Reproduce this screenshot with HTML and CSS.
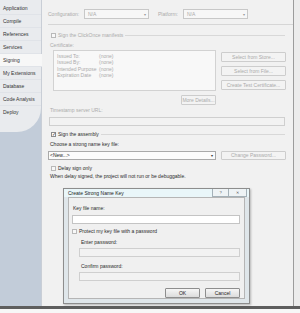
FILE: index.html
```html
<!DOCTYPE html>
<html>
<head>
    <title>Signing</title>
    <link rel="stylesheet" href="styles.css">
</head>
<body>
    <div class="window">
        <div class="sidebar">
            <div class="tabs">
                <div class="tab">Application</div>
                <div class="tab">Compile</div>
                <div class="tab">References</div>
                <div class="tab">Services</div>
                <div class="tab active">Signing</div>
                <div class="tab">My Extensions</div>
                <div class="tab">Database</div>
                <div class="tab">Code Analysis</div>
                <div class="tab last">Deploy</div>
            </div>
        </div>

        <div class="content">
            <div class="cfg-row off">
                <span class="cfg-label">Configuration:</span>
                <div class="select cfg-select">N/A<span class="arrow">&#9662;</span></div>
                <span class="cfg-label plat">Platform:</span>
                <div class="select cfg-select">N/A<span class="arrow">&#9662;</span></div>
            </div>
            <div class="rule"></div>

            <div class="hdr-row off first-hdr">
                <span class="check"></span>
                <span>Sign the ClickOnce manifests</span>
                <span class="hdr-line"></span>
            </div>
            <div class="label off cert-label">Certificate:</div>
            <div class="cert-area">
                <div class="cert-box off">
                    <div class="cert-line"><span class="key">Issued To:</span><span>(none)</span></div>
                    <div class="cert-line"><span class="key">Issued By:</span><span>(none)</span></div>
                    <div class="cert-line"><span class="key">Intended Purpose</span><span>(none)</span></div>
                    <div class="cert-line"><span class="key">Expiration Date</span><span>(none)</span></div>
                </div>
                <div class="cert-buttons">
                    <div class="btn off">Select from Store...</div>
                    <div class="btn off">Select from File...</div>
                    <div class="btn off">Create Test Certificate...</div>
                </div>
            </div>
            <div class="more-row">
                <div class="btn off more">More Details...</div>
            </div>
            <div class="label off ts-label">Timestamp server URL:</div>
            <div class="input ts-input"></div>

            <div class="hdr-row sign-hdr">
                <span class="check checked">&#10003;</span>
                <span>Sign the assembly</span>
                <span class="hdr-line"></span>
            </div>
            <div class="label choose">Choose a strong name key file:</div>
            <div class="key-row">
                <div class="select key-select">&lt;New...&gt;<span class="arrow dark">&#9662;</span></div>
                <div class="btn off change">Change Password...</div>
            </div>
            <div class="hdr-row delay-row">
                <span class="check"></span>
                <span>Delay sign only</span>
            </div>
            <div class="label note">When delay signed, the project will not run or be debuggable.</div>

            <div class="dialog">
                <div class="dlg-title">
                    <span class="dlg-caption">Create Strong Name Key</span>
                    <span class="dlg-ctrls">
                        <span class="ctrl">?</span>
                        <span class="ctrl close">&#10005;</span>
                    </span>
                </div>
                <div class="dlg-body">
                    <div class="label">Key file name:</div>
                    <div class="input white key-input"></div>
                    <div class="hdr-row protect-row">
                        <span class="check"></span>
                        <span>Protect my key file with a password</span>
                    </div>
                    <div class="pw-block">
                        <div class="label">Enter password:</div>
                        <div class="input pw-input"></div>
                        <div class="label confirm">Confirm password:</div>
                        <div class="input pw-input"></div>
                    </div>
                    <div class="dlg-buttons">
                        <div class="btn dlg-btn">OK</div>
                        <div class="btn dlg-btn">Cancel</div>
                    </div>
                </div>
            </div>
        </div>
        <div class="edge"></div>
    </div>
    <div class="bottom"></div>
</body>
</html>
```

FILE: styles.css
```css
body {
    margin: 0;
    width: 300px;
    height: 313px;
    overflow: hidden;
    background: #f4f4f4;
    font-family: "Liberation Sans", Arial, sans-serif;
    font-size: 5px;
    color: #2a2a2a;
}
.window {
    display: flex;
    height: 306px;
    border-bottom: 3px solid #5e5e5e;
}
.sidebar {
    width: 41px;
    background: #c2ccd9;
    border-right: 1px solid #c9ced6;
}
.tabs {
    background: #e9ebee;
    padding-top: 2px;
    border-bottom-right-radius: 24px;
}
.tab {
    height: 13px;
    line-height: 13px;
    padding-left: 3px;
    border-bottom: 1px solid #e0e3e8;
    box-sizing: border-box;
    color: #333;
}
.tab.active {
    background: #f7f7f7;
    margin-right: -1px;
}
.tab.last {
    height: 26px;
    line-height: 13px;
    border-bottom: none;
}
.content {
    width: 252px;
    background: #f1f1f1;
    display: flex;
    flex-direction: column;
    padding-left: 6px;
    box-sizing: border-box;
    border-right: 1px solid #9c9c9c;
}
.edge {
    flex: 1;
    background: #ececec;
}
.off {
    color: #ababab;
}
.cfg-row {
    display: flex;
    align-items: center;
    margin-top: 9px;
    height: 10px;
}
.cfg-label {
    width: 36px;
}
.cfg-label.plat {
    width: 25px;
    margin-left: 9px;
}
.select {
    height: 10px;
    line-height: 9px;
    border: 1px solid #c8c8c8;
    box-sizing: border-box;
    background: #f7f7f7;
    padding-left: 3px;
    display: flex;
    justify-content: space-between;
}
.cfg-select {
    width: 65px;
}
.arrow {
    font-size: 4px;
    padding-right: 2px;
    color: #9a9a9a;
}
.arrow.dark {
    color: #333;
}
.rule {
    margin-top: 5px;
    height: 1px;
    background: #d6d6d6;
}
.hdr-row {
    display: flex;
    align-items: center;
    height: 6px;
    padding-left: 3px;
}
.first-hdr {
    margin-top: 7px;
}
.check {
    width: 5px;
    height: 5px;
    border: 1px solid #b9b9b9;
    background: #f8f8f8;
    box-sizing: border-box;
    margin-right: 2px;
    font-size: 5px;
    line-height: 3px;
    text-align: center;
    color: #333;
}
.check.checked {
    border-color: #8c8c8c;
    background: #fff;
}
.hdr-line {
    flex: 1;
    height: 1px;
    background: #d8d8d8;
    margin: 0 8px 0 2px;
}
.label {
    height: 6px;
    line-height: 6px;
    padding-left: 2px;
}
.cert-label {
    margin-top: 4px;
}
.cert-area {
    display: flex;
    margin-top: 2px;
}
.cert-box {
    width: 163px;
    height: 41px;
    margin-left: 5px;
    border: 1px solid #d2d2d2;
    box-sizing: border-box;
    background: #f8f8f8;
    padding: 2px 0 0 3px;
}
.cert-line {
    display: flex;
    height: 6.3px;
    line-height: 6px;
}
.key {
    width: 42px;
}
.cert-buttons {
    display: flex;
    flex-direction: column;
    gap: 4px;
    margin-left: 5px;
    padding-top: 2px;
}
.btn {
    width: 65px;
    height: 10px;
    line-height: 8px;
    text-align: center;
    border: 1px solid #cdcdcd;
    border-radius: 1px;
    box-sizing: border-box;
    background: #f3f3f3;
}
.more-row {
    margin-top: 4px;
    padding-left: 133px;
}
.btn.more {
    width: 35px;
}
.ts-label {
    margin-top: 2px;
}
.input {
    height: 9px;
    border: 1px solid #cfcfcf;
    box-sizing: border-box;
    background: #f2f2f2;
}
.ts-input {
    margin: 4px 8px 0 1px;
}
.sign-hdr {
    margin-top: 5px;
}
.choose {
    margin-top: 4px;
}
.key-row {
    display: flex;
    gap: 5px;
    margin-top: 4px;
}
.key-select {
    width: 168px;
    height: 9px;
    line-height: 7px;
    border-color: #a9a9a9;
    background: #fbfbfb;
    color: #222;
    padding-left: 1px;
}
.btn.change {
    height: 9px;
    line-height: 7px;
}
.delay-row {
    margin-top: 5px;
}
.note {
    margin-top: 2px;
}
.dialog {
    margin: 9px 0 0 15px;
    width: 187px;
    height: 116px;
    border: 1px solid #8d8d8d;
    box-sizing: border-box;
    background: #dfe6ea;
    box-shadow: 1px 1px 2px rgba(0,0,0,0.25);
    padding: 0 4px 4px 4px;
    display: flex;
    flex-direction: column;
}
.dlg-title {
    height: 11px;
    display: flex;
    align-items: center;
    justify-content: space-between;
    background: #e9f6f9;
    margin: 0 -4px;
    padding: 0 2px 0 4px;
}
.dlg-caption {
    color: #222;
}
.dlg-ctrls {
    display: flex;
    align-self: flex-start;
}
.ctrl {
    width: 15px;
    height: 7px;
    line-height: 7px;
    text-align: center;
    border: 1px solid #a4b1b8;
    border-top: none;
    background: #eef3f5;
    font-size: 4px;
    color: #555;
}
.ctrl.close {
    width: 17px;
    margin-left: -1px;
}
.dlg-body {
    flex: 1;
    background: #f0f0f0;
    border: 1px solid #b5b5b5;
    padding: 7px 4px 0 2px;
}
.key-input {
    margin-top: 4px;
    margin-left: 1px;
}
.white {
    background: #fff;
    border-color: #c4c4c4;
}
.protect-row {
    margin-top: 4px;
    padding-left: 1px;
}
.pw-block {
    padding-left: 8px;
    margin-top: 5px;
}
.pw-input {
    margin-top: 3px;
}
.confirm {
    margin-top: 6px;
}
.dlg-buttons {
    display: flex;
    justify-content: flex-end;
    gap: 5px;
    margin-top: 7px;
}
.dlg-btn {
    width: 35px;
    height: 10px;
    border-color: #8e8e8e;
    background: linear-gradient(#f6f6f6, #dcdcdc);
    color: #222;
}
.bottom {
    height: 4px;
    background: #f7f7f7;
}
```
